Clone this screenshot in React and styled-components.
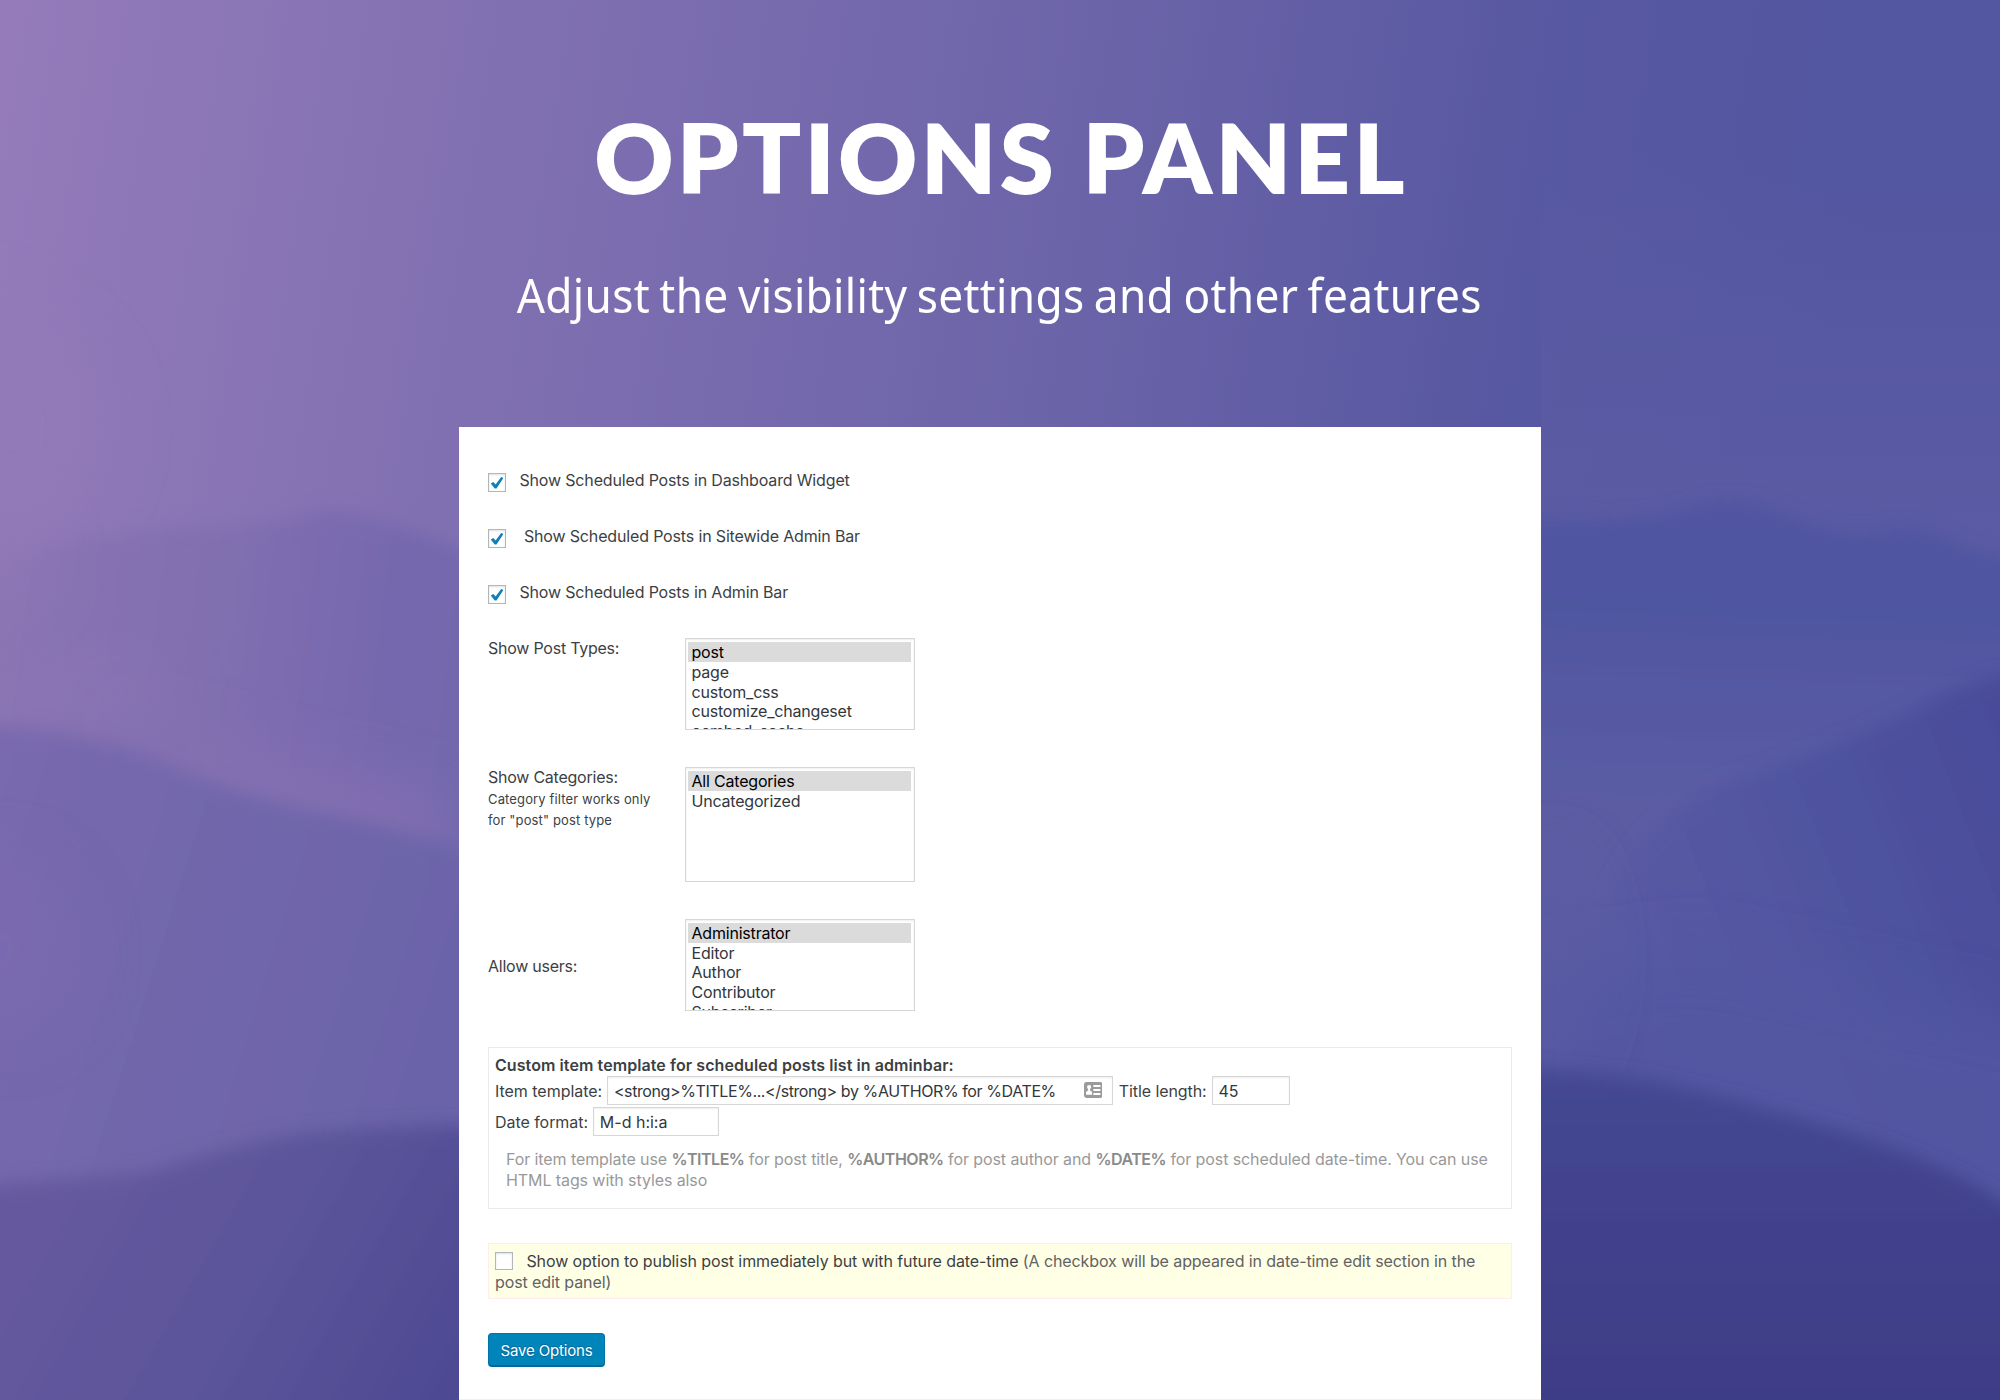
import React from "react";
import styled, { createGlobalStyle } from "styled-components";

const GlobalStyle = createGlobalStyle`
  *, *::before, *::after { box-sizing: border-box; }
  body { margin: 0; background: #6b63a8; }
`;

const Stage = styled.main`
  position: relative;
  width: 2000px;
  height: 1400px;
  overflow: hidden;
  display: flex;
  flex-direction: column;
  align-items: center;
  font: 400 16px/21px Inter, "Open Sans", sans-serif;
  color: #3c3f43;
`;

const Backdrop = styled.svg`
  position: absolute;
  inset: 0;
  width: 100%;
  height: 100%;
`;

const Hero = styled.header`
  position: relative;
  height: 427px;
  display: flex;
  flex-direction: column;
  align-items: center;
  color: #fff;
`;

const Title = styled.h1`
  margin: 98px 0 0 2px;
  font: 800 97.5px/117px Lato, sans-serif;
  letter-spacing: 3.2px;
  white-space: nowrap;
`;

const Subtitle = styled.p`
  margin: 46px 0 0 -1px;
  font: 400 47px/68px "Noto Sans", sans-serif;
  letter-spacing: 0.35px;
  word-spacing: -2.6px;
  white-space: nowrap;
  transform: scaleX(0.94);
`;

const Panel = styled.form`
  position: relative;
  width: 1082px;
  height: 973px;
  padding: 43.3px 29px 0;
  background: #fff;
  border-bottom: 1px solid #f1f1f1;
`;

const CheckRow = styled.label`
  display: flex;
  align-items: flex-start;
  gap: ${(p) => p.$gap || 13}px;
  height: 56px;
  line-height: 20px;
  letter-spacing: -0.155px;
`;

const CheckBox = styled.span`
  display: ${(p) => (p.$inline ? "inline-flex" : "flex")};
  flex: none;
  align-items: center;
  justify-content: center;
  width: 18.4px;
  height: 18.4px;
  margin-top: ${(p) => (p.$inline ? 0 : 3.2)}px;
  margin-right: ${(p) => (p.$inline ? 13 : 0)}px;
  vertical-align: ${(p) => (p.$inline ? "-3.5px" : "baseline")};
  background: #fff;
  border: 1px solid #b1b6bb;
  box-shadow: inset 0 1px 2px rgba(0, 0, 0, 0.12);
`;

const Field = styled.div`
  display: grid;
  grid-template-columns: 197px 230px;
  align-items: start;
  height: ${(p) => p.$height}px;
`;

const FieldLabel = styled.div`
  padding-top: ${(p) => p.$drop || 0}px;
  line-height: 20px;
  letter-spacing: -0.24px;
`;

const FieldNote = styled.small`
  display: block;
  margin-top: 1.5px;
  width: 175px;
  font-size: 13px;
  line-height: 21.3px;
  letter-spacing: 0.14px;
`;

const ListBox = styled.div`
  height: ${(p) => p.$height}px;
  padding: 3.2px 3px 0 2px;
  overflow: hidden;
  background: #fff;
  border: 1px solid #d6d6d6;
  box-shadow: inset 0 1px 2px rgba(0, 0, 0, 0.07);
`;

const Option = styled.div`
  height: 19.6px;
  padding-left: 3.5px;
  line-height: 21px;
  letter-spacing: -0.2px;
  color: ${(p) => (p.$selected ? "#000" : "#32373c")};
  background: ${(p) => (p.$selected ? "#dbdbdb" : "transparent")};
`;

const TemplateBox = styled.section`
  height: 162px;
  padding: 7px 6px 0;
  border: 1px solid #ebebeb;
`;

const TemplateTitle = styled.strong`
  display: block;
  font-weight: 600;
  line-height: 21px;
  letter-spacing: 0.08px;
`;

const InputRow = styled.div`
  display: flex;
  align-items: center;
  height: 29px;
  margin-bottom: 2px;
`;

const InputLabel = styled.span`
  margin-left: ${(p) => p.$left || 0}px;
  margin-right: 5.3px;
  padding-top: 2px;
  letter-spacing: ${(p) => p.$track || 0}px;
  white-space: nowrap;
`;

const Input = styled.span`
  display: flex;
  align-items: center;
  justify-content: space-between;
  width: ${(p) => p.$width}px;
  height: 29px;
  padding: 2px 10px 0 5.5px;
  color: #32373c;
  letter-spacing: ${(p) => p.$track || 0}px;
  white-space: nowrap;
  border: 1px solid #d6d6d6;
  box-shadow: inset 0 1px 2px rgba(0, 0, 0, 0.07);

  svg { margin-bottom: 2px; }
`;

const Hint = styled.p`
  margin: 13px 0 0 11px;
  width: 1000px;
  line-height: 21.4px;
  letter-spacing: -0.09px;
  color: #999;

  strong { font-weight: 600; letter-spacing: -0.5px; color: #8a8a8a; }
`;

const Notice = styled.label`
  display: block;
  height: 56px;
  margin-top: 34px;
  padding: 7px 6px 0;
  line-height: 21px;
  letter-spacing: -0.095px;
  background: #ffffe6;
  border: 1px solid #ffecec;
`;

const Muted = styled.span`
  color: #626262;
`;

const SaveButton = styled.button`
  display: block;
  width: 117px;
  height: 34px;
  margin-top: 34.5px;
  padding: 2px 0 0;
  font: 400 15px/30px Inter, sans-serif;
  letter-spacing: -0.16px;
  color: #fff;
  text-shadow: 0 -1px 1px #006799, 0 1px 1px #006799;
  background: #0085ba;
  border: 1px solid #0073aa;
  border-bottom: 2px solid #006799;
  border-radius: 4px;
`;

const Tick = () => (
  <svg width="14" height="14" viewBox="0 0 14 14">
    <path d="M0.8 7.500 3.300 6 5.600 8.600 11.200 0.900 13.400 1.900 6.500 12.600 4.700 12.600Z" fill="#0f7fb8" />
  </svg>
);

const ContactCard = () => (
  <svg width="18.5" height="16" viewBox="0 0 18.5 16">
    <rect width="18.5" height="16" rx="2.4" fill="#9b9b9b" />
    <circle cx="5.1" cy="5.1" r="2.100" fill="#fff" />
    <path d="M4.1 6h2v2.600l2 1.300v2.900H2V9.900l2.100-1.300Z" fill="#fff" />
    <path d="M9.400 3h7v1.900h-7zM9.400 7h7v1.900h-7zM9.400 11h7v1.900h-7z" fill="#fff" />
  </svg>
);

const Landscape = () => (
  <Backdrop viewBox="0 0 2000 1400" preserveAspectRatio="none">
    <defs>
      <linearGradient id="sky" gradientUnits="userSpaceOnUse" x1="0" y1="0" x2="1850" y2="300">
        <stop offset="0" stopColor="#957bba" />
        <stop offset="0.28" stopColor="#8070b1" />
        <stop offset="0.58" stopColor="#6c64a9" />
        <stop offset="0.82" stopColor="#5758a1" />
        <stop offset="1" stopColor="#5356a0" />
      </linearGradient>
      <linearGradient id="haze" x1="0" y1="0" x2="0" y2="1">
        <stop offset="0" stopColor="#5c5ca4" stopOpacity="0" />
        <stop offset="1" stopColor="#5c5ca4" stopOpacity="0.9" />
      </linearGradient>
      <linearGradient id="farLeft" gradientUnits="userSpaceOnUse" x1="0" y1="640" x2="480" y2="700">
        <stop offset="0" stopColor="#8b74b3" />
        <stop offset="0.45" stopColor="#806fb0" />
        <stop offset="0.8" stopColor="#7668ae" />
        <stop offset="1" stopColor="#7267ad" />
      </linearGradient>
      <linearGradient id="midLeft" gradientUnits="userSpaceOnUse" x1="0" y1="750" x2="480" y2="900">
        <stop offset="0" stopColor="#7969ae" />
        <stop offset="0.5" stopColor="#7166ab" />
        <stop offset="1" stopColor="#6b64a9" />
      </linearGradient>
      <linearGradient id="nearLeft" gradientUnits="userSpaceOnUse" x1="60" y1="1170" x2="480" y2="1410">
        <stop offset="0" stopColor="#66599f" />
        <stop offset="0.5" stopColor="#5a549a" />
        <stop offset="1" stopColor="#4b4891" />
      </linearGradient>
      <linearGradient id="farRight" gradientUnits="userSpaceOnUse" x1="1800" y1="500" x2="1790" y2="820">
        <stop offset="0" stopColor="#5155a0" />
        <stop offset="0.3" stopColor="#4f55a0" />
        <stop offset="0.9" stopColor="#5a5ba3" />
        <stop offset="1" stopColor="#5b5ba3" />
      </linearGradient>
      <linearGradient id="midRight" gradientUnits="userSpaceOnUse" x1="1600" y1="900" x2="2010" y2="740">
        <stop offset="0" stopColor="#5a5ba3" />
        <stop offset="0.2" stopColor="#5658a2" />
        <stop offset="0.55" stopColor="#4f539f" />
        <stop offset="1" stopColor="#494c9a" />
      </linearGradient>
      <linearGradient id="nearRight" gradientUnits="userSpaceOnUse" x1="0" y1="1060" x2="0" y2="1400">
        <stop offset="0" stopColor="#444892" />
        <stop offset="0.5" stopColor="#41418c" />
        <stop offset="1" stopColor="#3e3d87" />
      </linearGradient>
      <filter id="soft" x="-20%" y="-20%" width="140%" height="140%">
        <feGaussianBlur stdDeviation="9" />
      </filter>
      <filter id="mist" x="-80%" y="-80%" width="260%" height="260%">
        <feGaussianBlur stdDeviation="30" />
      </filter>
    </defs>
    <rect width="2000" height="1400" fill="url(#sky)" />
    <rect x="1541" y="150" width="459" height="450" fill="url(#haze)" />
    <ellipse cx="-40" cy="430" rx="150" ry="130" fill="#937ab8" filter="url(#mist)" opacity="0.7" />
    <path d="M-60 590 0 565Q70 530 200 527Q270 525 330 510Q400 520 470 555L1000 600V1400H-60Z" fill="url(#farLeft)" filter="url(#soft)" />
    <ellipse cx="0" cy="560" rx="45" ry="50" fill="#9077b6" filter="url(#mist)" opacity="0.7" />
    <path d="M1000 520H1560Q1650 522 1690 508Q1730 492 1780 512Q1850 545 1890 528Q1930 526 1970 552L2080 565V1400H1000Z" fill="url(#farRight)" filter="url(#soft)" />
    <ellipse cx="85" cy="690" rx="90" ry="22" fill="#9077b5" filter="url(#mist)" opacity="0.7" />
    <path d="M120 720Q260 765 440 800V860L200 810Z" fill="#8471b1" filter="url(#mist)" />
    <path d="M-80 725H0Q100 735 170 765Q240 796 330 815Q400 828 480 858L560 890V1440H-80Z" fill="url(#midLeft)" filter="url(#soft)" />
    <ellipse cx="0" cy="950" rx="80" ry="90" fill="#7b6bb1" filter="url(#mist)" opacity="0.6" />
    <path d="M-80 1190Q60 1180 150 1172Q250 1138 330 1131Q420 1124 620 1124V1480H-80Z" fill="url(#nearLeft)" filter="url(#soft)" />
    <path d="M1610 900Q1630 830 1720 785Q1850 742 1920 708Q1960 678 2100 655V1300H1500L1540 1000Z" fill="url(#midRight)" filter="url(#soft)" />
    <path d="M1500 980 1700 950 2060 1030V1280H1500Z" fill="#5356a1" filter="url(#mist)" opacity="0.85" />
    <ellipse cx="1550" cy="960" rx="40" ry="110" fill="#5a5ba3" filter="url(#mist)" opacity="0.8" />
    <path d="M1400 1066Q1560 1066 1650 1080Q1730 1097 1850 1134Q1930 1158 2000 1200L2080 1240V1480H1400Z" fill="url(#nearRight)" filter="url(#soft)" />
  </Backdrop>
);

const CHECKS = [
  { text: "Show Scheduled Posts in Dashboard Widget" },
  { text: "Show Scheduled Posts in Sitewide Admin Bar", gap: 17.5 },
  { text: "Show Scheduled Posts in Admin Bar" },
];

const POST_TYPES = ["post", "page", "custom_css", "customize_changeset", "oembed_cache"];
const CATEGORIES = ["All Categories", "Uncategorized"];
const ROLES = ["Administrator", "Editor", "Author", "Contributor", "Subscriber"];

const Select = ({ options, height }) => (
  <ListBox $height={height}>
    {options.map((name, i) => (
      <Option key={name} $selected={i === 0}>{name}</Option>
    ))}
  </ListBox>
);

export default function App() {
  return (
    <>
      <GlobalStyle />
      <Stage>
        <Landscape />
        <Hero>
          <Title>OPTIONS PANEL</Title>
          <Subtitle>Adjust the visibility settings and other features</Subtitle>
        </Hero>
        <Panel>
          {CHECKS.map((c) => (
            <CheckRow key={c.text} $gap={c.gap}>
              <CheckBox><Tick /></CheckBox>
              {c.text}
            </CheckRow>
          ))}
          <Field $height={129}>
            <FieldLabel>Show Post Types:</FieldLabel>
            <Select options={POST_TYPES} height={92} />
          </Field>
          <Field $height={151.7}>
            <FieldLabel>
              Show Categories:
              <FieldNote>Category filter works only for "post" post type</FieldNote>
            </FieldLabel>
            <Select options={CATEGORIES} height={115} />
          </Field>
          <Field $height={128}>
            <FieldLabel $drop={37}>Allow users:</FieldLabel>
            <Select options={ROLES} height={92} />
          </Field>
          <TemplateBox>
            <TemplateTitle>Custom item template for scheduled posts list in adminbar:</TemplateTitle>
            <InputRow>
              <InputLabel $track={-0.03}>Item template:</InputLabel>
              <Input $width={506} $track={-0.4}>
                {"<strong>%TITLE%...</strong> by %AUTHOR% for %DATE%"}
                <ContactCard />
              </Input>
              <InputLabel $left={5.3} $track={-0.08}>Title length:</InputLabel>
              <Input $width={78}>45</Input>
            </InputRow>
            <InputRow>
              <InputLabel $track={-0.05}>Date format:</InputLabel>
              <Input $width={126}>M-d h:i:a</Input>
            </InputRow>
            <Hint>
              For item template use <strong>%TITLE%</strong> for post title, <strong>%AUTHOR%</strong> for
              post author and <strong>%DATE%</strong> for post scheduled date-time. You can use HTML tags
              with styles also
            </Hint>
          </TemplateBox>
          <Notice>
            <CheckBox $inline />
            Show option to publish post immediately but with future date-time{" "}
            <Muted>(A checkbox will be appeared in date-time edit section in the post edit panel)</Muted>
          </Notice>
          <SaveButton type="button">Save Options</SaveButton>
        </Panel>
      </Stage>
    </>
  );
}
